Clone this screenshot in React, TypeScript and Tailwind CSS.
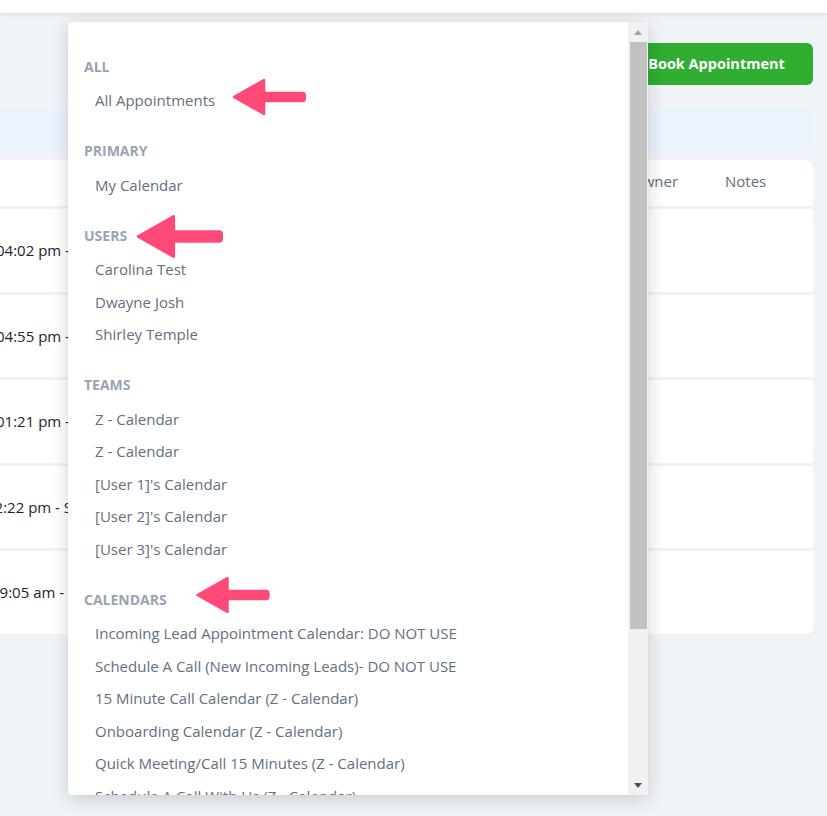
import React from 'react';

type Group = { title: string; items: string[] };

const groups: Group[] = [
    { title: 'All', items: ['All Appointments'] },
    { title: 'Primary', items: ['My Calendar'] },
    { title: 'Users', items: ['Carolina Test', 'Dwayne Josh', 'Shirley Temple'] },
    { title: 'Teams', items: ['Z - Calendar', 'Z - Calendar', "[User 1]'s Calendar", "[User 2]'s Calendar", "[User 3]'s Calendar"] },
    {
        title: 'Calendars',
        items: [
            'Incoming Lead Appointment Calendar: DO NOT USE',
            'Schedule A Call (New Incoming Leads)- DO NOT USE',
            '15 Minute Call Calendar (Z - Calendar)',
            'Onboarding Calendar (Z - Calendar)',
            'Quick Meeting/Call 15 Minutes (Z - Calendar)',
            'Schedule A Call With Us (Z - Calendar)',
        ],
    },
];

// left edge of each row is cut off by the viewport
const rows = [
    { text: '04:02 pm - Strategy Session', shift: 'ml-[-4px]' },
    { text: '04:55 pm - Discovery Call', shift: 'ml-[-4px]' },
    { text: '01:21 pm - Follow Up', shift: 'ml-[-4px]' },
    { text: '12:22 pm - Sales Call', shift: 'ml-[-14px]' },
    { text: '09:05 am - Intro Call', shift: 'ml-[-9px]' },
];

const PinkArrow: React.FC<{ className: string }> = ({ className }) => (
    <svg className={className} viewBox="0 0 74 38" fill="#ff4a78">
        <path
            d="M2 19 L32 2 L32 15 L71 15 Q73 15 73 19 Q73 23 71 23 L32 23 L32 36 Z"
            stroke="#ff4a78"
            strokeWidth="2.5"
            strokeLinejoin="round"
        />
    </svg>
);

const CalendarDropdown: React.FC = () => (
    <div className="absolute left-[68px] top-[22px] flex h-[773px] w-[580px] rounded-l-[3px] bg-white shadow-[0_4px_18px_rgba(15,23,42,0.18)]">
        <div className="flex-1 overflow-hidden pl-4 pt-[26px]">
            {groups.map((group, gi) => (
                <div key={group.title} className={gi > 0 ? 'mt-4' : ''}>
                    <div className="flex h-[36px] items-center text-[14px] font-bold uppercase text-[#98a4b3]">
                        {group.title}
                    </div>
                    {group.items.map((item, i) => (
                        <div key={i} className="flex h-[32.5px] items-center pl-[11px] text-[15px] text-[#627080]">
                            {item}
                        </div>
                    ))}
                </div>
            ))}
        </div>
        <div className="flex w-5 flex-col bg-[#f1f1f1]">
            <div className="flex h-5 items-center justify-center">
                <div className="h-0 w-0 border-x-[4px] border-b-[5px] border-x-transparent border-b-[#a3a3a3]" />
            </div>
            <div className="ml-[2px] mr-px h-[587px] bg-[#c1c1c1]" />
            <div className="flex-1" />
            <div className="flex h-5 items-center justify-center">
                <div className="h-0 w-0 border-x-[4px] border-t-[5px] border-x-transparent border-t-[#505050]" />
            </div>
        </div>
    </div>
);

export default function App() {
    return (
        <div className="relative h-[816px] w-[827px] overflow-hidden bg-[#f0f4f8] font-['Open_Sans',sans-serif]">
            <div className="h-[13px] bg-white shadow-[0_2px_4px_rgba(0,0,0,0.08)]" />

            <div className="flex justify-end pr-[14px] pt-[30px]">
                <button className="h-[42px] w-[193px] rounded-md bg-[#30ae32] text-[14.5px] font-bold text-white">
                    Book Appointment
                </button>
            </div>

            <div className="mr-[14px] mt-6 h-[42px] bg-[#ebf4fd]" />

            <div className="mr-[14px] mt-[9px] overflow-hidden rounded-r-lg bg-white">
                <div className="flex h-[46px] items-center pb-[3px] text-[15px] text-[#607080]">
                    <div className="flex-1" />
                    <div className="w-[94px]">Owner</div>
                    <div className="w-[88px]">Notes</div>
                </div>
                {rows.map((row, i) => (
                    <div key={i} className="flex h-[85.5px] items-center border-t-[3px] border-[#eef3f7] text-[15px] text-[#1f2430]">
                        <span className={`${row.shift} whitespace-nowrap`}>{row.text}</span>
                    </div>
                ))}
            </div>

            <CalendarDropdown />

            <PinkArrow className="absolute left-[232px] top-[78px] h-[38px] w-[74px]" />
            <PinkArrow className="absolute left-[136px] top-[214px] h-[45px] w-[87px]" />
            <PinkArrow className="absolute left-[195px] top-[576px] h-[38px] w-[75px]" />
        </div>
    );
}
